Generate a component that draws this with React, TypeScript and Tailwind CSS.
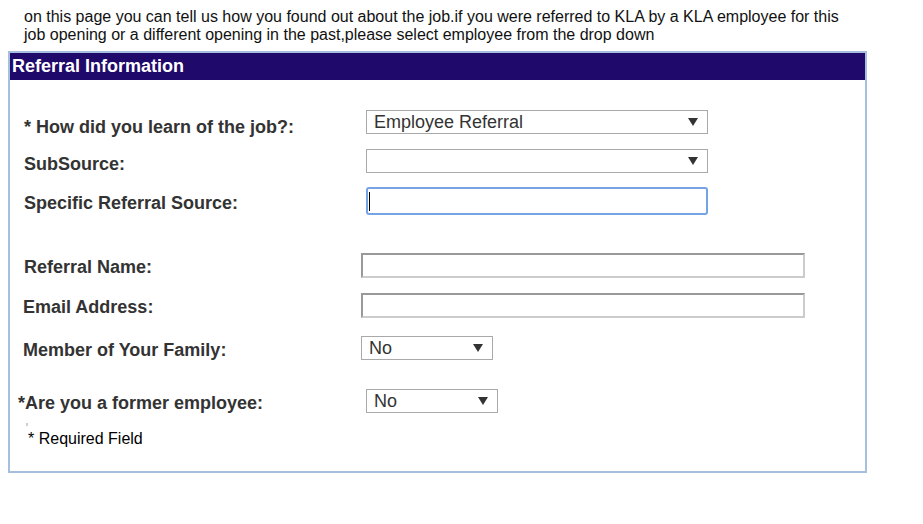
import React from 'react'

const font = { fontFamily: '"Liberation Sans", Arial, sans-serif' }

function Arrow() {
  return (
    <svg width="10" height="8" viewBox="0 0 10 8" className="shrink-0">
      <path d="M0 0 L10 0 L5 8 Z" fill="#333" />
    </svg>
  )
}

function Select({ value, w }: { value: string; w: string }) {
  return (
    <div className={`${w} h-[24px] border border-[#a9a9a9] bg-white flex items-center justify-between pl-[7px] pr-[9px] text-[18px] leading-[20px] text-[#333]`}>
      <span>{value}</span>
      <Arrow />
    </div>
  )
}

function TextBox() {
  return <div className="w-[444px] h-[25px] border-2 border-t-[#999] border-l-[#999] border-b-[#ccc] border-r-[#ccc] bg-white" />
}

// fixed row height so the label's top padding doesn't push the next row down
function Row({ mt, h, ml, lw, pt, label, children }: { mt: string; h: string; ml: string; lw: string; pt: string; label: string; children: React.ReactNode }) {
  return (
    <div className={`flex items-start ${mt} ${h}`}>
      <div className={`${ml} ${lw} ${pt} shrink-0 text-[18px] leading-[20px] font-bold text-[#333]`}>{label}</div>
      {children}
    </div>
  )
}

export default function App() {
  return (
    <div className="bg-white w-[923px] h-[524px]" style={font}>
      <div className="pt-[8px] pl-[24px] text-[16px] leading-[18px] text-[#111]">
        on this page you can tell us how you found out about the job.if you were referred to KLA by a KLA employee for this
        <br />
        job opening or a different opening in the past,please select employee from the drop down
      </div>

      <div className="mt-[7px] ml-[8px] w-[859px] border-2 border-[#a5bfdd] pb-[23px]">
        <div className="h-[27px] bg-[#1f0a6b] flex items-center pl-[2px] text-[18px] font-bold text-white">Referral Information</div>

        <Row mt="mt-[30px]" h="h-[24px]" ml="ml-[14px]" lw="w-[342px]" pt="pt-[7px]" label="* How did you learn of the job?:">
          <Select value="Employee Referral" w="w-[342px]" />
        </Row>
        <Row mt="mt-[15px]" h="h-[24px]" ml="ml-[14px]" lw="w-[342px]" pt="pt-[5px]" label="SubSource:">
          <Select value="" w="w-[342px]" />
        </Row>
        <Row mt="mt-[14px]" h="h-[28px]" ml="ml-[14px]" lw="w-[342px]" pt="pt-[6px]" label="Specific Referral Source:">
          <div className="w-[342px] h-[28px] border-2 border-[#76a2e6] rounded-[3px] bg-white flex items-center pl-[1px]">
            <div className="w-px h-[19px] bg-black" />
          </div>
        </Row>
        <Row mt="mt-[38px]" h="h-[25px]" ml="ml-[14px]" lw="w-[337px]" pt="pt-[4px]" label="Referral Name:">
          <TextBox />
        </Row>
        <Row mt="mt-[15px]" h="h-[25px]" ml="ml-[13px]" lw="w-[338px]" pt="pt-[4px]" label="Email Address:">
          <TextBox />
        </Row>
        <Row mt="mt-[18px]" h="h-[24px]" ml="ml-[13px]" lw="w-[338px]" pt="pt-[4px]" label="Member of Your Family:">
          <Select value="No" w="w-[132px]" />
        </Row>
        <Row mt="mt-[29px]" h="h-[24px]" ml="ml-[8px]" lw="w-[348px]" pt="pt-[4px]" label="*Are you a former employee:">
          <Select value="No" w="w-[132px]" />
        </Row>

        <div className="mt-[10px] ml-[16px] w-[2px] h-[3px] bg-[#cfcfcf]" />
        <div className="mt-[4px] pl-[18px] text-[16px] leading-[18px] text-black">* Required Field</div>
      </div>
    </div>
  )
}
